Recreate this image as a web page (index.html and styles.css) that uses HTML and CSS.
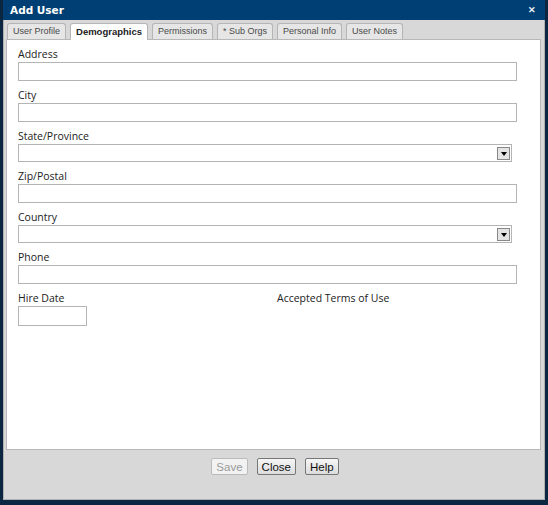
FILE: index.html
```html
<!DOCTYPE html>
<html>
<head>
<meta charset="utf-8">
<link rel="stylesheet" href="styles.css">
</head>
<body>
<div class="dialog">
  <div class="titlebar">
    <span class="title">Add User</span>
    <span class="close">&#x2715;</span>
  </div>
  <div class="tabs">
    <div class="tab">User Profile</div>
    <div class="tab active">Demographics</div>
    <div class="tab">Permissions</div>
    <div class="tab">* Sub Orgs</div>
    <div class="tab">Personal Info</div>
    <div class="tab">User Notes</div>
  </div>
  <div class="panel">
    <div class="field">
      <label class="label">Address</label>
      <div class="input"></div>
    </div>
    <div class="field">
      <label class="label">City</label>
      <div class="input"></div>
    </div>
    <div class="field">
      <label class="label">State/Province</label>
      <div class="select"><span class="arrow"></span></div>
    </div>
    <div class="field">
      <label class="label">Zip/Postal</label>
      <div class="input"></div>
    </div>
    <div class="field">
      <label class="label">Country</label>
      <div class="select"><span class="arrow"></span></div>
    </div>
    <div class="field">
      <label class="label">Phone</label>
      <div class="input"></div>
    </div>
    <div class="row">
      <div class="field half">
        <label class="label">Hire Date</label>
        <div class="input small"></div>
      </div>
      <div class="field half">
        <label class="label">Accepted Terms of Use</label>
      </div>
    </div>
  </div>
  <div class="buttons">
    <button class="btn disabled">Save</button>
    <button class="btn">Close</button>
    <button class="btn">Help</button>
  </div>
</div>
</body>
</html>
```
FILE: styles.css
```css
html, body {
  margin: 0;
  padding: 0;
}
body {
  width: 548px;
  height: 505px;
  background: #0b2640;
  overflow: hidden;
  font-family: "Liberation Sans", Arial, sans-serif;
}
.dialog {
  margin-left: 3px;
  width: 542px;
  height: 500px;
  background: #d8d8d8;
  box-sizing: border-box;
  border-left: 1px solid #b0b0b0;
  border-right: 1px solid #b0b0b0;
  border-bottom: 1px solid #b0b0b0;
  display: flex;
  flex-direction: column;
}
.titlebar {
  height: 20px;
  background: #003f73;
  color: #fff;
  display: flex;
  align-items: center;
  justify-content: space-between;
  padding: 0 9px 0 7px;
  margin: 0 -1px;
}
.title {
  font-family: "DejaVu Sans", Verdana, sans-serif;
  font-weight: bold;
  font-size: 10.5px;
}
.close {
  font-size: 9px;
  font-weight: bold;
  color: #e8eef4;
}
.tabs {
  display: flex;
  gap: 4px;
  padding: 3px 0 0 3px;
  height: 16px;
}
.tab {
  font-size: 9px;
  color: #4a4a4a;
  background: #e6e6e6;
  border: 1px solid #b5b5b5;
  border-bottom: none;
  border-radius: 3px 3px 0 0;
  padding: 0 5px;
  line-height: 15px;
  height: 16px;
  box-sizing: border-box;
}
.tab.active {
  background: #fff;
  color: #222;
  font-weight: bold;
  font-size: 9.5px;
  height: 17px;
  line-height: 16px;
  padding: 0 5px;
  position: relative;
  z-index: 1;
}
.panel {
  margin: 0 3px 0 2px;
  height: 411px;
  background: #fff;
  border: 1px solid #b8b8b8;
  box-sizing: border-box;
  padding: 7px 23px 0 11px;
  display: flex;
  flex-direction: column;
  gap: 7px;
}
.field {
  display: flex;
  flex-direction: column;
}
.label {
  font-family: "Open Sans", "Noto Sans", sans-serif;
  font-size: 10.5px;
  color: #222;
  line-height: 15px;
  height: 15px;
}
.input {
  height: 19px;
  border: 1px solid #b4b4b4;
  box-sizing: border-box;
  background: #fff;
}
.input.small {
  width: 69px;
  height: 20px;
}
.select {
  height: 18px;
  width: 494px;
  border: 1px solid #b4b4b4;
  box-sizing: border-box;
  background: #fff;
  display: flex;
  justify-content: flex-end;
  align-items: center;
  padding-right: 1px;
}
.arrow {
  width: 13px;
  height: 13px;
  box-sizing: border-box;
  border: 1px solid #888;
  background: #e4e4e4;
  position: relative;
}
.arrow::after {
  content: "";
  position: absolute;
  left: 3px;
  top: 4px;
  border-left: 3px solid transparent;
  border-right: 3px solid transparent;
  border-top: 4px solid #000;
}
.row {
  display: flex;
}
.half {
  width: 259px;
}
.half + .half {
  width: 240px;
}
.buttons {
  display: flex;
  justify-content: center;
  gap: 9px;
  padding-top: 8px;
  padding-left: 2px;
}
.btn {
  font-family: "Liberation Sans", Arial, sans-serif;
  font-size: 11.5px;
  height: 17px;
  padding: 0 4px;
  border: 1px solid #777;
  border-radius: 2px;
  background: linear-gradient(#f6f6f6, #dcdcdc);
  color: #111;
  line-height: 14px;
}
.btn.disabled {
  color: #999;
  border-color: #bbb;
  background: #f2f2f2;
}
```
